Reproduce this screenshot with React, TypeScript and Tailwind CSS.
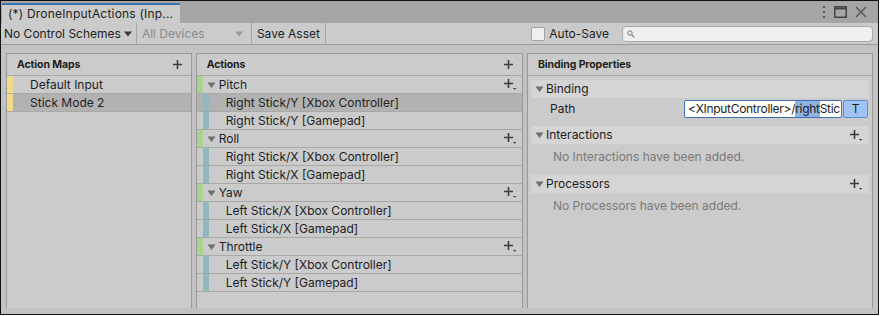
import React from 'react';

const font = { fontFamily: 'Inter, "Noto Sans", sans-serif' };

function PlusIcon() {
    return (
        <svg width="11" height="11" viewBox="0 0 11 11" className="shrink-0">
            <path d="M5.5 1v9M1 5.5h9" stroke="#3c3c3c" strokeWidth="1.6" />
        </svg>
    );
}

function PlusMenuIcon() {
    return (
        <svg width="14" height="13" viewBox="0 0 14 13" className="shrink-0">
            <path d="M5.5 1v9M1 5.5h9" stroke="#3c3c3c" strokeWidth="1.6" />
            <path d="M10 10h3.4l-1.7 1.8z" fill="#3c3c3c" />
        </svg>
    );
}

function Triangle() {
    return (
        <svg width="9" height="8" viewBox="0 0 9 8" className="shrink-0">
            <path d="M0.5 1.5h8l-4 5.5z" fill="#6e6e6e" />
        </svg>
    );
}

interface ActionGroup {
    name: string;
    bindings: string[];
}

const actions: ActionGroup[] = [
    { name: 'Pitch', bindings: ['Right Stick/Y [Xbox Controller]', 'Right Stick/Y [Gamepad]'] },
    { name: 'Roll', bindings: ['Right Stick/X [Xbox Controller]', 'Right Stick/X [Gamepad]'] },
    { name: 'Yaw', bindings: ['Left Stick/X [Xbox Controller]', 'Left Stick/X [Gamepad]'] },
    { name: 'Throttle', bindings: ['Left Stick/Y [Xbox Controller]', 'Left Stick/Y [Gamepad]'] },
];

function PanelHeader({ title, plus = true }: { title: string; plus?: boolean }) {
    return (
        <div className="h-[22px] flex items-center justify-between pl-[10px] pr-[8px] border-b border-[#a8a8a8]">
            <span className="text-[10.5px] font-bold text-[#1e1e1e] tracking-[-0.1px]">{title}</span>
            {plus && <PlusIcon />}
        </div>
    );
}

function SectionHeader({ title, plus }: { title: string; plus?: boolean }) {
    return (
        <div className="h-[18px] mx-[3px] bg-[#d5d5d5] flex items-center justify-between pl-[4px] pr-[6px]">
            <div className="flex items-center gap-[2px]">
                <Triangle />
                <span className="text-[12px] text-[#1e1e1e]">{title}</span>
            </div>
            {plus && <PlusMenuIcon />}
        </div>
    );
}

export default function App() {
    return (
        <div className="w-[880px] h-[316px] bg-white" style={font}>
            <div className="w-[879px] h-[315px] border border-[#111] bg-[#c2c2c2] flex flex-col overflow-hidden">
                {/* title bar */}
                <div className="h-[22px] bg-[#a5a5a5] flex items-end justify-between pl-[1px] pr-[11px] shrink-0">
                    <div className="w-[178px] h-[20px] bg-[#cbcbcb] border-t-2 border-[#3a72b0] flex items-center pl-[6px]">
                        <span className="text-[12px] text-[#1e1e1e] leading-none tracking-[0.2px]">(*) DroneInputActions (Inp...</span>
                    </div>
                    <div className="flex items-center gap-[8px] h-[20px] pb-[2px]">
                        <svg width="4" height="12" viewBox="0 0 4 12">
                            <rect x="1" y="0" width="2" height="2" fill="#555" />
                            <rect x="1" y="5" width="2" height="2" fill="#555" />
                            <rect x="1" y="10" width="2" height="2" fill="#555" />
                        </svg>
                        <svg width="13" height="12" viewBox="0 0 13 12">
                            <rect x="0.75" y="0.75" width="11.5" height="10.5" fill="none" stroke="#444" strokeWidth="1.5" />
                            <path d="M0.75 2.5h11.5" stroke="#444" strokeWidth="2" />
                        </svg>
                        <svg width="12" height="12" viewBox="0 0 12 12">
                            <path d="M1 1l10 10M11 1l-10 10" stroke="#555" strokeWidth="1.4" />
                        </svg>
                    </div>
                </div>

                {/* toolbar */}
                <div className="h-[22px] bg-[#cbcbcb] border-b border-[#999] flex items-stretch shrink-0 text-[12px]">
                    <div className="flex items-center pl-[3px] pr-[4px] border-r border-[#a6a6a6] gap-[3px] text-[#1e1e1e]">
                        <span>No Control Schemes</span>
                        <svg width="8" height="6" viewBox="0 0 8 6"><path d="M0 0.5h8l-4 5z" fill="#3a3a3a" /></svg>
                    </div>
                    <div className="w-[115px] flex items-center justify-between pl-[5px] pr-[8px] border-r border-[#a6a6a6] text-[#8a8a8a]">
                        <span>All Devices</span>
                        <svg width="8" height="6" viewBox="0 0 8 6"><path d="M0 0.5h8l-4 5z" fill="#9a9a9a" /></svg>
                    </div>
                    <div className="flex items-center px-[5px] border-r border-[#a6a6a6] text-[#1e1e1e]">
                        <span>Save Asset</span>
                    </div>
                    <div className="flex-1" />
                    <div className="flex items-center gap-[4px] text-[#1e1e1e]">
                        <div className="w-[14px] h-[14px] bg-[#efefef] border border-[#a5a5a5] rounded-[2px]" />
                        <span>Auto-Save</span>
                    </div>
                    <div className="w-[251px] ml-[13px] mr-[5px] flex items-center">
                        <div className="w-full h-[16px] bg-[#efefef] border border-[#a9a9a9] rounded-[4px] flex items-center pl-[4px]">
                            <svg width="8" height="8" viewBox="0 0 8 8">
                                <circle cx="3" cy="3" r="2.2" fill="none" stroke="#777" strokeWidth="1" />
                                <path d="M4.7 4.7l2.6 2.6" stroke="#777" strokeWidth="1.2" />
                            </svg>
                        </div>
                    </div>
                </div>

                {/* content */}
                <div className="flex-1 flex gap-[4px] pt-[8px] pb-[6px] pl-[5px] pr-[5px] min-h-0">
                    {/* action maps */}
                    <div className="w-[186px] bg-[#cbcbcb] border-t border-x border-[#999] flex flex-col">
                        <PanelHeader title="Action Maps" />
                        {['Default Input', 'Stick Mode 2'].map((m, i) => (
                            <div
                                key={m}
                                className={`h-[18px] flex items-stretch border-b border-[#a8a8a8] ${i === 1 ? 'bg-[#b2b2b2]' : ''}`}
                            >
                                <div className="w-[6px] bg-[#f3d98a]" />
                                <span className="pl-[17px] text-[12px] text-[#1e1e1e] leading-[17px]">{m}</span>
                            </div>
                        ))}
                    </div>

                    {/* actions */}
                    <div className="w-[328px] bg-[#cbcbcb] border-t border-x border-[#999] flex flex-col">
                        <PanelHeader title="Actions" />
                        {actions.map((a) => (
                            <React.Fragment key={a.name}>
                                <div className="h-[18px] flex items-stretch border-b border-[#a8a8a8]">
                                    <div className="w-[6px] bg-[#a8d48d]" />
                                    <div className="flex-1 flex items-center justify-between pl-[4px] pr-[5px]">
                                        <div className="flex items-center gap-[3px]">
                                            <Triangle />
                                            <span className="text-[12px] text-[#1e1e1e]">{a.name}</span>
                                        </div>
                                        <PlusMenuIcon />
                                    </div>
                                </div>
                                {a.bindings.map((b, j) => (
                                    <div
                                        key={b}
                                        className={`h-[18px] flex items-stretch border-b border-[#a8a8a8] ${a.name === 'Pitch' && j === 0 ? 'bg-[#b2b2b2]' : ''}`}
                                    >
                                        <div className="w-[6px]" />
                                        <div className="w-[6px] bg-[#8fb8bf]" />
                                        <span className="pl-[17px] text-[12px] text-[#1e1e1e] leading-[17px]">{b}</span>
                                    </div>
                                ))}
                            </React.Fragment>
                        ))}
                    </div>

                    {/* binding properties */}
                    <div className="flex-1 bg-[#cbcbcb] border-t border-x border-[#999] flex flex-col">
                        <PanelHeader title="Binding Properties" plus={false} />
                        <div className="h-[4px]" />
                        <SectionHeader title="Binding" />
                        <div className="h-[22px] flex items-center pl-[22px] pr-[4px]">
                            <span className="text-[12px] text-[#1e1e1e] w-[134px]">Path</span>
                            <div className="w-[158px] shrink-0 h-[18px] bg-white border border-[#3e6eb4] rounded-[2px] flex items-center overflow-hidden whitespace-nowrap text-[12px] tracking-[-0.3px] text-[#1e1e1e] pl-[3px]">
                                <span>&lt;XInputController&gt;/</span>
                                <span className="bg-[#8db2e6]">right</span>
                                <span>Stic</span>
                            </div>
                            <div className="ml-[1px] w-[25px] shrink-0 h-[18px] bg-[#9ec3f4] border border-[#5d8ccf] rounded-[2px] flex items-center justify-center text-[12px] text-[#1e1e1e]">
                                T
                            </div>
                        </div>
                        <div className="h-[6px]" />
                        <SectionHeader title="Interactions" plus />
                        <div className="h-[26px] flex items-center pl-[25px] text-[12px] text-[#7a7a7a]">
                            No Interactions have been added.
                        </div>
                        <div className="h-[5px]" />
                        <SectionHeader title="Processors" plus />
                        <div className="h-[26px] flex items-center pl-[25px] text-[12px] text-[#7a7a7a]">
                            No Processors have been added.
                        </div>
                    </div>
                </div>
            </div>
        </div>
    );
}
